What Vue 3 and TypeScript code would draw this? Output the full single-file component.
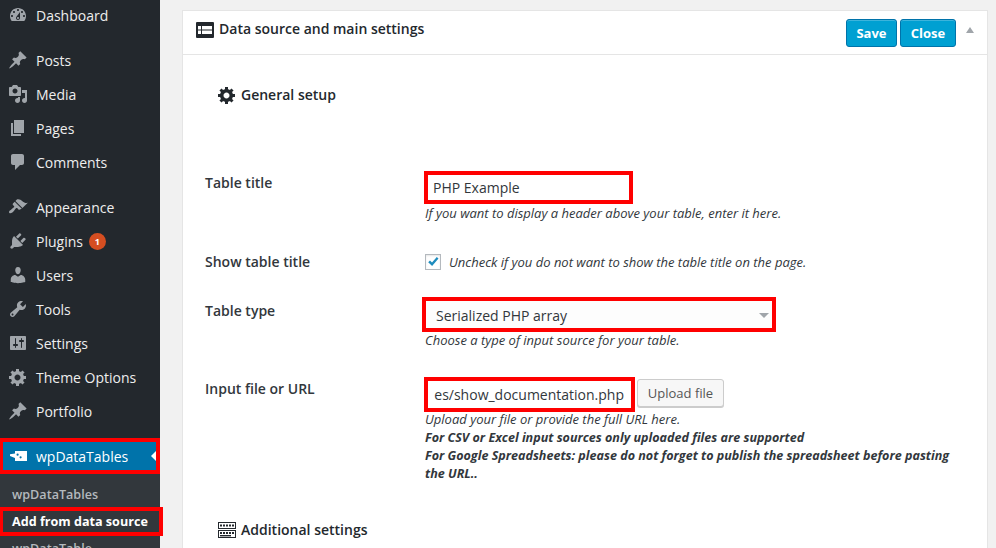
<script setup lang="ts">
interface Item { label: string; d: string; badge?: string; gapBefore?: boolean }

const gear = 'M18 12h-2.18c-.17.7-.44 1.35-.81 1.93l1.54 1.54-2.1 2.1-1.54-1.54c-.58.36-1.23.63-1.91.79V19H8v-2.18c-.68-.16-1.33-.43-1.91-.79l-1.54 1.54-2.12-2.12 1.54-1.54c-.36-.58-.63-1.23-.79-1.91H1V9.03h2.17c.16-.7.44-1.35.8-1.94L2.43 5.55l2.1-2.1 1.54 1.54c.58-.37 1.24-.64 1.93-.81V2h3v2.18c.68.16 1.33.43 1.91.79l1.54-1.54 2.12 2.12-1.54 1.54c.36.59.64 1.24.8 1.94H18V12zm-8.5 1.5c1.66 0 3-1.34 3-3s-1.34-3-3-3-3 1.34-3 3 1.34 3 3 3z'
const pin = 'M10.44 3.02l1.82-1.82 6.36 6.35-1.83 1.82c-1.05-.68-2.48-.57-3.41.36l-.75.75c-.92.93-1.04 2.35-.35 3.41l-1.83 1.82-2.41-2.41-2.8 2.79c-.42.42-3.38 2.71-3.8 2.29s1.86-3.39 2.28-3.81l2.79-2.79L4.1 9.36l1.83-1.82c1.05.69 2.48.57 3.4-.36l.75-.75c.93-.92 1.05-2.35.36-3.41z'

const items: Item[] = [
  { label: 'Dashboard', d: 'M3.76 16h12.48c1.1-1.37 1.76-3.11 1.76-5 0-4.42-3.58-8-8-8s-8 3.58-8 8c0 1.89.66 3.63 1.76 5zM10 4c.55 0 1 .45 1 1s-.45 1-1 1-1-.45-1-1 .45-1 1-1zM6 6c.55 0 1 .45 1 1s-.45 1-1 1-1-.45-1-1 .45-1 1-1zm8 0c.55 0 1 .45 1 1s-.45 1-1 1-1-.45-1-1 .45-1 1-1zm-5.37 5.55L12 7v6c0 1.1-.9 2-2 2s-2-.9-2-2c0-.57.24-1.08.63-1.45zM4 10c.55 0 1 .45 1 1s-.45 1-1 1-1-.45-1-1 .45-1 1-1zm12 0c.55 0 1 .45 1 1s-.45 1-1 1-1-.45-1-1 .45-1 1-1zm-5 3c0-.55-.45-1-1-1s-1 .45-1 1 .45 1 1 1 1-.45 1-1z' },
  { label: 'Posts', d: pin, gapBefore: true },
  { label: 'Media', d: 'M13 11V4c0-.55-.45-1-1-1h-1.67L9 1H5L3.67 3H2c-.55 0-1 .45-1 1v7c0 .55.45 1 1 1h10c.55 0 1-.45 1-1zM7 4.5c1.38 0 2.5 1.12 2.5 2.5S8.38 9.5 7 9.5 4.5 8.38 4.5 7 5.62 4.5 7 4.5zM14 6h5v10.5c0 1.38-1.12 2.5-2.5 2.5S14 17.88 14 16.5s1.12-2.5 2.5-2.5c.17 0 .34.02.5.05V9h-3V6zm-4 8.05V13h2v3.5c0 1.38-1.12 2.5-2.5 2.5S7 17.88 7 16.5 8.12 14 9.5 14c.17 0 .34.02.5.05z' },
  { label: 'Pages', d: 'M6 15V2h10v13H6zm-1 1h8v2H3V5h2v11z' },
  { label: 'Comments', d: 'M5 2h9c1.1 0 2 .9 2 2v7c0 1.1-.9 2-2 2h-2l-5 5v-5H5c-1.1 0-2-.9-2-2V4c0-1.1.9-2 2-2z' },
  { label: 'Appearance', d: 'M14.48 11.06L7.41 3.99l1.5-1.5c.5-.56 2.3-.47 3.51.32 1.21.8 1.43 1.28 2.91 2.1 1.18.64 2.45 1.26 4.45.85zm-.71.71L6.7 4.7 4.93 6.47c-.39.39-.39 1.02 0 1.41l1.06 1.06c.39.39.39 1.03 0 1.42-.6.6-1.43 1.11-2.21 1.69-.35.26-.7.53-1.01.84C1.43 13.23.4 14.95 1.4 15.94c.99 1 2.71-.03 4.03-1.35.31-.31.58-.66.85-1.02.57-.78 1.08-1.61 1.69-2.21.39-.39 1.02-.39 1.41 0l1.06 1.06c.39.39 1.02.39 1.41 0z', gapBefore: true },
  { label: 'Plugins', badge: '1', d: 'M13.11 4.36L9.87 7.6 8 5.73l3.24-3.24c.35-.34 1.05-.2 1.56.32.52.51.66 1.21.31 1.55zm-8 1.77l.91-1.12 9.01 9.01-1.19.84c-.71.71-2.63 1.16-3.82 1.16H6.14L4.9 17.26c-.59.59-1.54.59-2.12 0-.59-.58-.59-1.53 0-2.12l1.24-1.24v-3.88c0-1.13.4-3.19 1.09-3.89zm7.26 3.97l3.24-3.24c.34-.35 1.04-.21 1.55.31.52.51.66 1.21.31 1.55l-3.24 3.25z' },
  { label: 'Users', d: 'M10 9.25c-2.27 0-2.73-3.44-2.73-3.44C7 4.02 7.82 2 9.97 2c2.16 0 2.98 2.02 2.71 3.81 0 0-.41 3.44-2.68 3.44zm0 2.57L12.72 10c2.39 0 4.52 2.33 4.52 4.53v2.49s-3.65 1.13-7.24 1.13c-3.65 0-7.24-1.13-7.24-1.13v-2.49c0-2.25 1.94-4.48 4.47-4.48z' },
  { label: 'Tools', d: 'M16.68 9.77c-1.34 1.34-3.3 1.67-4.95.99l-5.41 6.52c-.99.99-2.59.99-3.58 0s-.99-2.59 0-3.57l6.52-5.42c-.68-1.65-.35-3.61.99-4.95 1.28-1.28 3.12-1.62 4.72-1.06l-2.89 2.89 2.82 2.82 2.86-2.87c.53 1.58.18 3.39-1.08 4.65zM3.81 16.21c.4.39 1.04.39 1.43 0 .4-.4.4-1.04 0-1.43-.39-.4-1.03-.4-1.43 0-.39.39-.39 1.03 0 1.43z' },
  { label: 'Settings', d: 'M18 16V4c0-.55-.45-1-1-1H3c-.55 0-1 .45-1 1v12c0 .55.45 1 1 1h14c.55 0 1-.45 1-1zM8 11h1c.55 0 1 .45 1 1s-.45 1-1 1H8v1.5c0 .28-.22.5-.5.5s-.5-.22-.5-.5V13H6c-.55 0-1-.45-1-1s.45-1 1-1h1V5.5c0-.28.22-.5.5-.5s.5.22.5.5V11zm5-2h-1c-.55 0-1-.45-1-1s.45-1 1-1h1V5.5c0-.28.22-.5.5-.5s.5.22.5.5V7h1c.55 0 1 .45 1 1s-.45 1-1 1h-1v5.5c0 .28-.22.5-.5.5s-.5-.22-.5-.5V9z' },
  { label: 'Theme Options', d: gear },
  { label: 'Portfolio', d: pin },
]

const keyTopCells = [0, 1, 2, 3, 4]
const keyBottomCells = [0, 1, 2, 3, 4]
</script>

<template>
  <div class="page">
    <aside class="sidebar">
      <ul class="menu">
        <li v-for="item in items" :key="item.label" class="menu-item" :class="{ gapped: item.gapBefore }">
          <svg class="menu-icon" viewBox="0 0 20 20"><path :d="item.d" fill="currentColor" /></svg>
          <span class="menu-label">{{ item.label }}</span>
          <span v-if="item.badge" class="badge">{{ item.badge }}</span>
        </li>
      </ul>

      <div class="current">
        <svg class="table-icon" viewBox="0 0 17 10">
          <path fill-rule="evenodd" fill="#fff" d="M5 0h12v10H5V7L0 5V3.2L5 2.4zM7.6 2.6a1.1 1.1 0 1 0 0 2.2 1.1 1.1 0 0 0 0-2.2zM10.6 5.2a1.1 1.1 0 1 0 0 2.2 1.1 1.1 0 0 0 0-2.2z" />
        </svg>
        <span class="current-label">wpDataTables</span>
        <span class="current-arrow"></span>
      </div>

      <ul class="submenu">
        <li class="sub-item">wpDataTables</li>
        <li class="sub-item sub-active">Add from data source</li>
        <li class="sub-item">wpDataTable</li>
      </ul>
    </aside>

    <main class="main">
      <section class="card">
        <header class="card-head">
          <svg class="head-icon" viewBox="0 0 18 16">
            <path fill-rule="evenodd" fill="#23282d" d="M1 0h16a1 1 0 0 1 1 1v14a1 1 0 0 1-1 1H1a1 1 0 0 1-1-1V1a1 1 0 0 1 1-1zM2 4v3.4h3V4zm4 0v3.4h10V4zM2 8.6V12h3V8.6zm4 0V12h10V8.6z" />
          </svg>
          <h2 class="head-title">Data source and main settings</h2>
          <div class="head-actions">
            <button class="primary save">Save</button>
            <button class="primary close">Close</button>
            <span class="collapse"></span>
          </div>
        </header>

        <div class="card-body">
          <h3 class="section-title setup">
            <svg class="gear" viewBox="1 2 17 17"><path :d="gear" fill="#23282d" /></svg>
            General setup
          </h3>

          <div class="row row-title">
            <label class="row-label">Table title</label>
            <div class="row-field">
              <div class="mark text-box title-box">PHP Example</div>
              <p class="help">If you want to display a header above your table, enter it here.</p>
            </div>
          </div>

          <div class="row row-show">
            <label class="row-label">Show table title</label>
            <div class="row-field check-line">
              <span class="checkbox">
                <svg viewBox="0 0 14 14"><path d="M2.2 7.2l1.8-1.7 2 2 4.8-5.4 1.7 1.5-6.4 7.4z" fill="#1e8cbe" /></svg>
              </span>
              <p class="help">Uncheck if you do not want to show the table title on the page.</p>
            </div>
          </div>

          <div class="row row-type">
            <label class="row-label">Table type</label>
            <div class="row-field">
              <div class="mark select-box">
                <span>Serialized PHP array</span>
                <span class="select-arrow"></span>
              </div>
              <p class="help tight">Choose a type of input source for your table.</p>
            </div>
          </div>

          <div class="row row-input">
            <label class="row-label">Input file or URL</label>
            <div class="row-field">
              <div class="input-line">
                <div class="mark url-box"><div class="url-clip"><span>files/show_documentation.php</span></div></div>
                <button class="upload">Upload file</button>
              </div>
              <p class="help first">Upload your file or provide the full URL here.</p>
              <p class="help strong">For CSV or Excel input sources only uploaded files are supported</p>
              <p class="help strong">For Google Spreadsheets: please do not forget to publish the spreadsheet before pasting the URL..</p>
            </div>
          </div>

          <h3 class="section-title additional">
            <svg class="keys" viewBox="0 0 18 16">
              <rect x="0.5" y="0.5" width="17" height="6" fill="none" stroke="#23282d" />
              <rect x="0.5" y="8.5" width="17" height="7" fill="none" stroke="#23282d" />
              <rect v-for="i in keyTopCells" :key="'t' + i" :x="2 + i * 3" y="2.5" width="2" height="2" fill="#23282d" />
              <rect v-for="i in keyBottomCells" :key="'b' + i" :x="2 + i * 3" y="10" width="2" height="2" fill="#23282d" />
              <rect x="2" y="13" width="11" height="1.4" fill="#23282d" />
            </svg>
            Additional settings
          </h3>
        </div>
      </section>
    </main>
  </div>
</template>

<style>
html, body { margin: 0; background: #f1f1f1; overflow: hidden; }
</style>

<style scoped>
.page {
  display: flex;
  width: 996px;
  height: 548px;
  overflow: hidden;
  background: #f1f1f1;
  font-family: "Open Sans", "Liberation Sans", sans-serif;
  color: #32373c;
}
ul { list-style: none; margin: 0; padding: 0; }
p, h2, h3 { margin: 0; }

.sidebar {
  position: relative;
  flex: 0 0 160px;
  width: 160px;
  height: 548px;
  background: #23282d;
}
.menu { margin-top: -2px; }
.menu-item {
  display: flex;
  align-items: center;
  height: 34px;
  color: #eee;
  font-size: 14px;
}
.menu-item.gapped { margin-top: 11px; }
.menu-icon {
  flex: none;
  width: 20px;
  height: 20px;
  margin-left: 8px;
  margin-right: 8px;
  color: #a0a5aa;
}
.badge {
  width: 17px;
  height: 17px;
  margin-left: 6px;
  border-radius: 50%;
  background: #d54e21;
  color: #fff;
  font-size: 9px;
  font-weight: 700;
  line-height: 17px;
  text-align: center;
}

.current {
  display: flex;
  align-items: center;
  box-sizing: border-box;
  height: 36px;
  margin-top: 10px;
  border: 4px solid #f00;
  border-left-width: 3px;
  background: #0073aa;
  color: #fff;
  font-size: 14px;
  position: relative;
}
.table-icon { flex: none; width: 17px; height: 10px; margin-left: 7px; margin-right: 9px; }
.current-arrow {
  position: absolute;
  right: 0;
  top: 9px;
  border: 5px solid transparent;
  border-right-color: #fff;
  border-left-width: 0;
}

.submenu {
  height: 74px;
  padding-top: 7px;
  box-sizing: border-box;
  background: #32373c;
  font-size: 12.6px;
}
.sub-item {
  height: 27px;
  padding-left: 12px;
  line-height: 27px;
  color: #b4b9be;
  font-weight: 600;
  white-space: nowrap;
  box-sizing: border-box;
}
.sub-active {
  position: relative;
  width: 163px;
  padding-left: 9px;
  height: 29px;
  line-height: 21px;
  margin: -1px 0 -1px 0;
  border: 4px solid #f00;
  border-left-width: 3px;
  color: #fff;
  font-weight: 700;
}

.main {
  flex: 1;
  min-width: 0;
  padding: 10px 8px 0 22px;
}
.card {
  box-sizing: border-box;
  height: 560px;
  background: #fff;
  border: 1px solid #e5e5e5;
}
.card-head {
  display: flex;
  align-items: center;
  box-sizing: border-box;
  height: 44px;
  padding-left: 13px;
  border-bottom: 1px solid #e5e5e5;
}
.head-icon { width: 18px; height: 16px; margin-right: 5px; margin-bottom: 6px; }
.head-title {
  font-size: 14px;
  font-weight: 600;
  color: #23282d;
  line-height: 36px;
  margin-bottom: 8px;
}
.head-actions {
  display: flex;
  align-items: center;
  margin-left: auto;
  padding-right: 13px;
  margin-top: 0;
}
.primary {
  box-sizing: border-box;
  height: 28px;
  padding: 0;
  border: 1px solid #0073aa;
  border-radius: 3px;
  background: #00a0d2;
  color: #fff;
  font-family: inherit;
  font-size: 13px;
  font-weight: 700;
  box-shadow: inset 0 1px 0 rgba(120, 200, 230, .5);
}
.save { width: 51px; }
.close { width: 56px; margin-left: 3px; }
.collapse {
  width: 0;
  height: 0;
  margin-left: 10px;
  margin-bottom: 6px;
  border: 4px solid transparent;
  border-bottom: 6px solid #a0a5aa;
  border-top-width: 0;
}

.card-body { padding-left: 22px; }
.section-title {
  display: flex;
  align-items: center;
  font-size: 14px;
  font-weight: 600;
  color: #23282d;
  line-height: 20px;
}
.setup { margin: 30px 0 0 13px; }
.gear { width: 17px; height: 17px; margin-right: 6px; }
.keys { width: 18px; height: 16px; margin-right: 5px; }

.row { display: flex; }
.row-label {
  flex: 0 0 220px;
  font-size: 14px;
  font-weight: 600;
  color: #32373c;
  line-height: 20px;
}
.row-field { flex: 1; min-width: 0; }
.row-title { margin-top: 66px; }
.row-title .row-label { padding-top: 2px; }
.row-show { margin-top: 30px; height: 20px; align-items: center; }
.row-type { margin-top: 25px; }
.row-type .row-label { padding-top: 4px; }
.row-input { margin-top: 28px; }
.row-input .row-label { padding-top: 2px; }

.mark { box-sizing: border-box; border: 4px solid #f00; background: #fff; }
.text-box, .select-box, .url-box {
  font-size: 14px;
  color: #32373c;
  white-space: nowrap;
}
.title-box {
  width: 209px;
  height: 33px;
  margin-left: -1px;
  padding-left: 5px;
  line-height: 26px;
}
.select-box {
  display: flex;
  align-items: center;
  justify-content: space-between;
  width: 354px;
  height: 35px;
  margin-left: -3px;
  padding: 1px 3px 0 10px;
  background: #fdfdfd;
}
.select-arrow {
  border: 5px solid transparent;
  border-top: 5px solid #a0a5aa;
  border-bottom-width: 0;
}
.input-line { display: flex; align-items: center; margin-left: -1px; }
.url-box {
  flex: none;
  width: 211px;
  height: 35px;
  padding: 0 7px 0 6px;
}
.url-clip {
  display: flex;
  justify-content: flex-end;
  overflow: hidden;
  line-height: 27px;
}
.url-clip span { flex: none; }
.upload {
  box-sizing: border-box;
  width: 87px;
  height: 28px;
  margin-left: 2px;
  margin-bottom: 4px;
  padding: 0;
  border: 1px solid #ccc;
  border-radius: 3px;
  background: #f7f7f7;
  color: #555;
  font-family: inherit;
  font-size: 13px;
  box-shadow: 0 1px 0 #ccc;
}

.help {
  margin-top: 0;
  font-size: 13px;
  font-style: italic;
  line-height: 18px;
  color: #32373c;
}
.help.tight { margin-top: -1px; }
.help.first { margin-top: -2px; margin-bottom: 1px; }
.help.strong { font-size: 12.55px; font-weight: 700; width: 530px; margin-top: 0; }
.check-line { display: flex; align-items: center; }
.check-line .help { margin: 0 0 0 8px; }
.checkbox {
  display: block;
  flex: none;
  box-sizing: border-box;
  width: 16px;
  height: 16px;
  border: 1px solid #b4b9be;
  background: #fff;
  box-shadow: inset 0 1px 2px rgba(0, 0, 0, .1);
}
.checkbox svg { display: block; width: 14px; height: 14px; }

.additional { margin: 37px 0 0 13px; }
</style>
